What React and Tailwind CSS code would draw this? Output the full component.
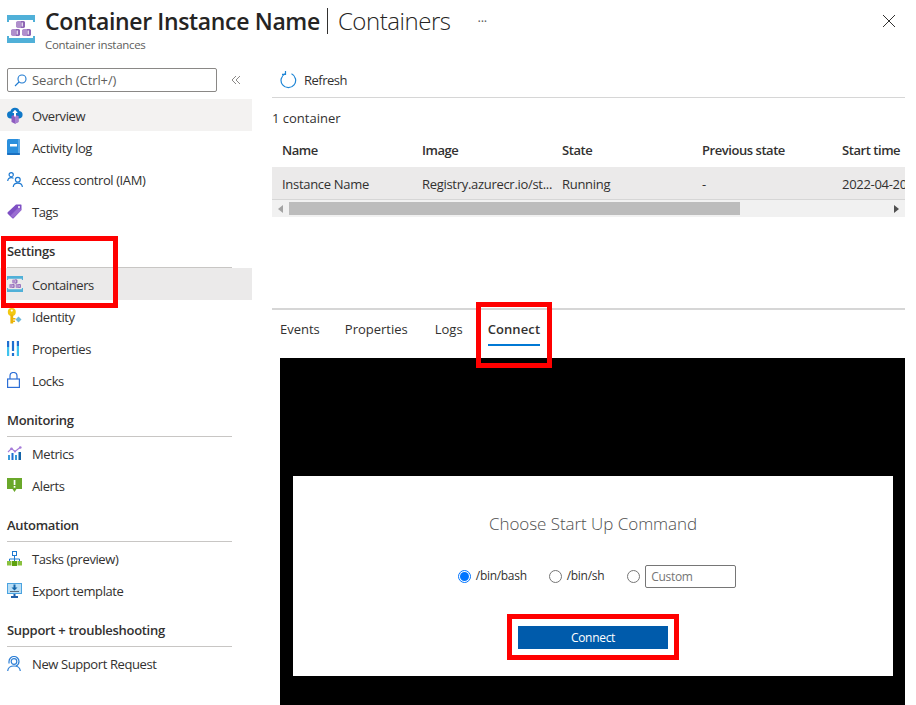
import React from "react";

const Cube = ({ x, y }) => (
  <g>
    <path d={`M${x} ${y + 1}l1.500-1h6l1.500 1v5l-1.500 1h-6l-1.500-1z`} fill="#b08fcc" />
    <path d={`M${x + 5} ${y}h2.500l1.500 1v5l-1.500 1h-2.500z`} fill="#8f66b5" />
    <path d={`M${x + 5.500} ${y + 1.500}h1.500v4h-1.500z`} fill="#e2d6ec" />
  </g>
);

const ContainerIcon = ({ s = 28 }) => (
  <svg width={s} height={s} viewBox="0 0 28 28">
    <path d="M0 0h28v7h-2V5H2v2H0z" fill="#50b0d8" />
    <path d="M0 21h2v2h24v-2h2v7H0z" fill="#50b0d8" />
    <Cube x={9} y={6} />
    <Cube x={4} y={14} />
    <Cube x={15} y={14} />
  </svg>
);

const OverviewIcon = () => (
  <svg width="16" height="17" viewBox="0 0 16 17">
    <path d="M3.800 11.500a3.600 3.600 0 0 1-.3-7.200A4.600 4.600 0 0 1 12.400 4a3.800 3.800 0 0 1 0 7.500z" fill="#0f78c8" />
    <path d="M4.500 9l3.500-1.500L11.500 9v6l-3.500 1.800L4.500 15z" fill="#8e5cc0" />
    <path d="M8 9v7.800l3.500-1.800V9z" fill="#a67fd0" />
    <path d="M8 2.800l2.800 3.200H9v3.500H7V6H5.200z" fill="#fff" />
  </svg>
);
const ActivityIcon = () => (
  <svg width="13" height="16" viewBox="0 0 13 16">
    <rect x="0" y="0" width="13" height="16" rx="1.500" fill="#2b8fdd" />
    <rect x="11" y="0" width="2" height="16" rx="1" fill="#5ea9e6" />
    <rect x="3" y="5" width="7" height="2.500" fill="#fff" />
    <rect x="0" y="14" width="13" height="2" rx="1" fill="#1a6fc0" />
  </svg>
);
const IamIcon = () => (
  <svg width="16" height="15" viewBox="0 0 16 15" fill="none" stroke="#1f7ad1" strokeWidth="1.200">
    <circle cx="4.200" cy="2.700" r="2.100" />
    <path d="M.7 9c.3-2.400 1.600-3.300 3.500-3.300 1 0 1.700.2 2.300.7" />
    <circle cx="10.800" cy="7.800" r="2.400" />
    <path d="M6.200 15c.3-2.700 2-3.900 4.600-3.900s4.300 1.200 4.600 3.900" />
  </svg>
);
const TagIcon = () => (
  <svg width="15" height="15" viewBox="0 0 15 15">
    <path d="M9 .5h5c.3 0 .5.200.5.500v5L6.700 14.300c-.4.400-1 .4-1.400 0L.7 9.700c-.4-.4-.4-1 0-1.400z" fill="#7e4fc3" />
    <path d="M12 3L3.500 11.500l2.500 2.500 8.500-8z" fill="#a67bd9" opacity=".7" />
    <circle cx="12" cy="3" r="1" fill="#fff" />
  </svg>
);
const IdentityIcon = () => (
  <svg width="15" height="16" viewBox="0 0 15 16">
    <path d="M8.500 11.500l3-3 3 3-3 3z" fill="#6fb8d9" />
    <circle cx="4.800" cy="4" r="4" fill="#f2c811" />
    <rect x="3.400" y="6.500" width="2.800" height="9" fill="#eab308" />
    <rect x="6" y="10" width="2.500" height="1.500" fill="#eab308" />
    <rect x="6" y="12.500" width="2" height="1.500" fill="#eab308" />
    <circle cx="4.800" cy="2.600" r="1.100" fill="#fff" />
  </svg>
);
const PropsIcon = () => (
  <svg width="12" height="15" viewBox="0 0 12 15">
    <rect x="0" y="0" width="2.200" height="6" fill="#1f6fd0" />
    <rect x="0" y="6" width="2.200" height="9" fill="#3fc3ee" />
    <rect x="4.900" y="0" width="2.200" height="10" fill="#1f6fd0" />
    <rect x="4.900" y="12" width="2.200" height="3" fill="#1f6fd0" />
    <rect x="9.800" y="0" width="2.200" height="5" fill="#1f6fd0" />
    <rect x="9.800" y="5" width="2.200" height="10" fill="#3fc3ee" />
  </svg>
);
const LockIcon = () => (
  <svg width="13" height="16" viewBox="0 0 13 16" fill="none" stroke="#2d6fd6" strokeWidth="1.200">
    <rect x=".6" y="7" width="11.800" height="8.400" />
    <path d="M3 7V4a3.500 3.500 0 0 1 7 0V7" />
  </svg>
);
const MetricsIcon = () => (
  <svg width="15" height="14" viewBox="0 0 15 14">
    <rect x="1" y="9" width="2" height="5" fill="#3a9ad9" />
    <rect x="4.500" y="7" width="2" height="7" fill="#1f6fd0" />
    <rect x="8" y="9" width="2" height="5" fill="#3a9ad9" />
    <rect x="11.500" y="6" width="2.500" height="8" fill="#1464a8" />
    <path d="M1 6l3.500-3.500L8 5.500l5-4" fill="none" stroke="#a67bd9" strokeWidth="1.100" />
    <circle cx="13.300" cy="1.500" r="1.300" fill="#a67bd9" />
    <circle cx="4.500" cy="2.700" r="1.300" fill="#a67bd9" />
    <circle cx="8" cy="5.500" r="1.100" fill="#a67bd9" />
  </svg>
);
const AlertsIcon = () => (
  <svg width="15" height="14" viewBox="0 0 15 14">
    <path d="M0 0h15v11H9.500L7.500 14 5.500 11H0z" fill="#6aa82a" />
    <rect x="6.700" y="2" width="1.700" height="5" fill="#fff" />
    <rect x="6.700" y="8" width="1.700" height="1.700" fill="#fff" />
  </svg>
);
const TasksIcon = () => (
  <svg width="15" height="15" viewBox="0 0 15 15">
    <rect x="5.500" y=".5" width="4" height="4" fill="#fff" stroke="#1f7ad1" />
    <path d="M7.500 5v3M2.500 10V8h10v2M7.500 8v2" fill="none" stroke="#1f7ad1" />
    <rect x="0" y="10" width="4.500" height="4.500" fill="#8ac13f" />
    <rect x="5" y="10" width="5" height="5" fill="#5ea20f" />
    <rect x="10.500" y="10" width="4.500" height="4.500" fill="#8ac13f" />
  </svg>
);
const ExportIcon = () => (
  <svg width="15" height="15" viewBox="0 0 15 15">
    <rect x="0.500" y="0.500" width="14" height="10" fill="#b8def6" stroke="#4ba3e0" />
    <path d="M6.500 1.500h2v3h2L7.500 7.500l-3-3h2z" fill="#1464a8" />
    <rect x="3" y="8" width="9" height="1" fill="#5a6b7d" />
    <rect x="6.500" y="11" width="2" height="2" fill="#1f5ea8" />
    <rect x="4" y="13" width="7" height="2" fill="#1f5ea8" />
  </svg>
);
const SupportIcon = () => (
  <svg width="14" height="15" viewBox="0 0 14 15" fill="none" stroke="#2d7fd6" strokeWidth="1.200">
    <circle cx="7" cy="5.500" r="2.800" />
    <path d="M2 7.500V5.500a5 5 0 0 1 10 0 5 5 0 0 1-3 4.500" />
    <path d="M.7 15c.2-3 2.500-5 6.300-5s6.100 2 6.300 5" />
  </svg>
);

const NavItem = ({ icon, label, active, hover }) => (
  <div className={`flex h-8 items-center ${active ? "bg-[#ebeaea]" : hover ? "bg-[#f3f2f1]" : ""}`}>
    <span className="flex w-[32px] shrink-0 items-center pl-[7px]">{icon}</span>
    <span className="pt-[2px] text-[13px] leading-[18px] tracking-[-0.4px] text-[#323130]">{label}</span>
  </div>
);

const Section = ({ title, children }) => (
  <div className="mt-[8px]">
    <div className="mx-[7px] flex h-[33px] w-[225px] items-center border-b border-[#c8c6c4] pt-[2px] text-[13px] font-semibold text-[#323130]">
      <span>{title}</span>
    </div>
    <div>{children}</div>
  </div>
);

const Radio = ({ checked, label }) => (
  <label className="flex items-center gap-[5px]">
    <span className={`flex h-[13px] w-[13px] items-center justify-center rounded-full border ${checked ? "border-[#0075ff]" : "border-[#767676]"}`}>
      {checked && <span className="h-[9px] w-[9px] rounded-full bg-[#0075ff]" />}
    </span>
    {label && <span className="text-[12px] text-[#323130]">{label}</span>}
  </label>
);

const RedBox = ({ className }) => (
  <div className={`pointer-events-none absolute border-[5px] border-[#ff0000] ${className}`} />
);

export default function App() {
  const heads = ["Name", "Image", "State", "Previous state", "Start time"];
  const cells = ["Instance Name", "Registry.azurecr.io/st...", "Running", "-", "2022-04-20"];
  return (
    <div className="relative h-[705px] w-[916px] overflow-hidden bg-white font-['Open_Sans','Noto_Sans',sans-serif] tracking-[-0.3px] text-[#323130]">
      {/* Header */}
      <header className="flex h-[68px] items-start pl-[7px]">
        <div className="mt-[15px]"><ContainerIcon /></div>
        <div className="ml-[10px] mt-[5px]">
          <div className="flex h-[32px] items-center whitespace-nowrap text-[24px] leading-[32px] text-[#252423]">
            <span className="text-[23px] font-semibold tracking-[-0.35px]">Container Instance Name</span>
            <span className="ml-[7px] mr-[10px] inline-block h-[26px] w-px bg-[#323130]" />
            <span className="font-light tracking-[-0.45px]">Containers</span>
            <span className="ml-[27px] text-[13px] leading-none text-[#605e5c]">···</span>
          </div>
          <div className="mt-[1px] text-[11.5px] leading-[14px] text-[#605e5c]">Container instances</div>
        </div>
        <svg className="ml-auto mr-[20px] mt-[14px]" width="14" height="14" viewBox="0 0 14 14" fill="none" stroke="#323130" strokeWidth="1">
          <path d="M1 1l12 12M13 1L1 13" />
        </svg>
      </header>

      <div className="flex">
        {/* Sidebar */}
        <aside className="w-[252px] shrink-0">
          <div className="flex h-[31px] items-start pl-[7px]">
            <div className="flex h-[24px] w-[210px] items-center rounded-[2px] border border-[#8a8886] pl-[6px]">
              <svg width="13" height="13" viewBox="0 0 13 13" fill="none" stroke="#1f7ad1" strokeWidth="1.100">
                <circle cx="8" cy="5" r="4" />
                <path d="M5 8l-4 4" />
              </svg>
              <span className="ml-[5px] text-[13px] leading-[18px] tracking-[-0.1px] text-[#605e5c]">Search (Ctrl+/)</span>
            </div>
            <svg className="ml-[14px] mt-[7px]" width="10" height="10" viewBox="0 0 10 10" fill="none" stroke="#8a8886" strokeWidth="1">
              <path d="M5 1L1 5l4 4M9 1L5 5l4 4" />
            </svg>
          </div>
          <NavItem icon={<OverviewIcon />} label="Overview" hover />
          <NavItem icon={<ActivityIcon />} label="Activity log" />
          <NavItem icon={<IamIcon />} label="Access control (IAM)" />
          <NavItem icon={<TagIcon />} label="Tags" />
          <Section title="Settings">
            <NavItem icon={<ContainerIcon s={16} />} label="Containers" active />
            <NavItem icon={<IdentityIcon />} label="Identity" />
            <NavItem icon={<PropsIcon />} label="Properties" />
            <NavItem icon={<LockIcon />} label="Locks" />
          </Section>
          <Section title="Monitoring">
            <NavItem icon={<MetricsIcon />} label="Metrics" />
            <NavItem icon={<AlertsIcon />} label="Alerts" />
          </Section>
          <Section title="Automation">
            <NavItem icon={<TasksIcon />} label="Tasks (preview)" />
            <NavItem icon={<ExportIcon />} label="Export template" />
          </Section>
          <Section title="Support + troubleshooting">
            <NavItem icon={<SupportIcon />} label="New Support Request" />
          </Section>
        </aside>

        {/* Main */}
        <main className="ml-[20px] flex w-[633px] flex-col">
          <div className="flex h-[30px] items-start border-b border-[#d6d6d6] pl-[8px]">
            <svg width="17" height="18" viewBox="0 0 17 18" fill="none" stroke="#1f86d6" strokeWidth="1.200" className="mt-[3px]">
              <path d="M11.500 2.800a7.300 7.300 0 1 1-6.300 0" />
              <path d="M5.500 0v3.300H2" />
            </svg>
            <span className="ml-[7px] mt-[4px] text-[13px] leading-[17px] tracking-[-0.5px]">Refresh</span>
          </div>
          <div className="mt-[11px] text-[13px] leading-[18px] tracking-[0px]">1 container</div>
          <div className="mt-[7px] overflow-hidden">
            <div className="flex h-[33px] items-center pl-[10px] text-[13px] font-semibold tracking-[-0.45px]">
              {heads.map((h) => (
                <div key={h} className="w-[140px] shrink-0 whitespace-nowrap">{h}</div>
              ))}
            </div>
            <div className="flex h-[33px] items-center border-b border-[#d6d6d6] bg-[#ebeaea] pl-[10px] pt-[4px] text-[13px]">
              {cells.map((c) => (
                <div key={c} className="w-[140px] shrink-0 whitespace-nowrap">{c}</div>
              ))}
            </div>
            <div className="flex h-[17px] items-center bg-[#f1f1f1]">
              <svg className="ml-[6px]" width="5" height="8" viewBox="0 0 5 8"><path d="M5 0v8L0 4z" fill="#a3a3a3" /></svg>
              <div className="ml-[6px] h-[13px] w-[451px] bg-[#bcbcbc]" />
              <svg className="ml-auto mr-[6px]" width="5" height="8" viewBox="0 0 5 8"><path d="M0 0v8l5-4z" fill="#505050" /></svg>
            </div>
          </div>
          <div className="mt-[91px] h-[2px] bg-[#d6d6d6]" />
          <div className="flex h-[48px] items-start pl-[8px] pt-[10px] text-[13px] tracking-[0px]">
            <span className="leading-[18px]">Events</span>
            <span className="ml-[25px] leading-[18px]">Properties</span>
            <span className="ml-[27px] leading-[18px]">Logs</span>
            <span className="ml-[25px] border-b-2 border-[#0078d4] pb-[6px] font-semibold leading-[18px] tracking-[0.1px]">Connect</span>
          </div>
          <div className="ml-[8px] h-[347px] bg-black px-[13px] pt-[118px]">
            <div className="flex h-[200px] w-[600px] flex-col items-center bg-white pt-[34px]">
              <div className="text-[17px] font-light leading-[28px] tracking-[-0.05px] text-[#505050]">Choose Start Up Command</div>
              <div className="mt-[26px] flex h-[24px] items-center pl-[8px]">
                <Radio checked label="/bin/bash" />
                <div className="ml-[22px]"><Radio label="/bin/sh" /></div>
                <div className="ml-[23px]"><Radio /></div>
                <div className="ml-[5px] flex h-[23px] w-[91px] items-center rounded-[2px] border border-[#767676] pl-[5px] pt-[2px] text-[12px] text-[#757575]">Custom</div>
              </div>
              <button className="mt-[38px] h-[23px] w-[150px] bg-[#005bab] text-[12px] text-white">Connect</button>
            </div>
          </div>
        </main>
      </div>

      <RedBox className="left-[1px] top-[236px] h-[72px] w-[117px]" />
      <RedBox className="left-[476px] top-[302px] h-[66px] w-[76px]" />
      <RedBox className="left-[507px] top-[614px] h-[46px] w-[172px]" />
    </div>
  );
}
